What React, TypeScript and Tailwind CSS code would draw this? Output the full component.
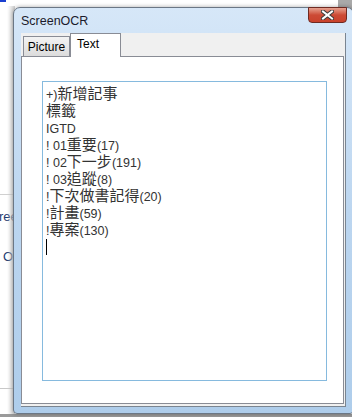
import React from 'react';

const lines = [
  '+)新增記事',
  '標籤',
  'IGTD',
  '! 01重要(17)',
  '! 02下一步(191)',
  '! 03追蹤(8)',
  '!下次做書記得(20)',
  '!計畫(59)',
  '!專案(130)',
];

// CJK glyphs render larger than the latin ones in the original font
const Line: React.FC<{ text: string }> = ({ text }) => {
  const parts = text.match(/[\u3400-\u9fff]+|[^\u3400-\u9fff]+/g) || [];
  return (
    <div className="h-[17px] leading-[17px] whitespace-nowrap">
      {parts.map((p, i) =>
        /[\u3400-\u9fff]/.test(p) ? (
          <span key={i} className="text-[15px]">{p}</span>
        ) : (
          <span key={i} className="text-[12.5px]">{p}</span>
        )
      )}
    </div>
  );
};

export default function App() {
  return (
    <div className="relative w-[352px] h-[417px] overflow-hidden bg-white font-['Liberation_Sans',sans-serif]">
      {/* desktop behind the window */}
      <div className="absolute left-0 top-0 w-[6px] h-[2px] bg-[#1a3fd0]" />
      <div className="absolute right-0 top-0 w-[14px] h-[10px] bg-[#a9a9a9]" />
      <div className="absolute left-0 top-[194px] w-[14px] h-px bg-[#d0d0d0]" />
      <div className="absolute left-0 top-[388px] w-[14px] h-px bg-[#c8c8c8]" />
      <div className="absolute left-[-1px] top-[210px] text-[13px] leading-none text-[#1b3a70]">ree</div>
      <div className="absolute left-[3px] top-[250px] text-[13px] leading-none text-[#1b3a70]">Oi</div>
      <div className="absolute left-[7px] top-[6px] w-[8px] h-[411px] bg-gradient-to-r from-transparent to-[#cfcfcf]" />
      <div className="absolute left-0 bottom-0 w-full h-[3px] bg-[#9a9a9a]" />

      {/* window */}
      <div className="absolute left-[13px] top-[7px] w-[341px] h-[407px] rounded-t-[7px] rounded-b-[4px] border border-[#6b7785] bg-gradient-to-b from-[#d6e7f8] via-[#bcd6f0] to-[#aecdeb] flex flex-col shadow-[0_0_4px_rgba(0,0,0,0.35)]">
        {/* title bar */}
        <div className="h-[25px] flex items-start justify-between pl-[7px] pr-[6px]">
          <span className="mt-[7px] text-[12.5px] leading-none text-[#1b1b2b]">ScreenOCR</span>
          <div className="w-[39px] h-[16px] -mt-px rounded-b-[4px] border border-[#6e2a22] bg-gradient-to-b from-[#e5a08f] via-[#cc4a35] to-[#c9422c] flex items-center justify-center">
            <svg width="13" height="10" viewBox="0 0 13 10">
              <path d="M2 1.5 L11 8.5 M11 1.5 L2 8.5" stroke="#3a3a3a" strokeWidth="4" strokeLinecap="square" />
              <path d="M2 1.5 L11 8.5 M11 1.5 L2 8.5" stroke="#ffffff" strokeWidth="2" strokeLinecap="square" />
            </svg>
          </div>
        </div>

        {/* client area */}
        <div className="ml-[7px] mr-[7px] mb-[6px] flex-1 bg-[#f0f0f0] border-r border-b border-[#7a8591] flex flex-col">
          {/* tab strip */}
          <div className="h-[23px] flex items-end pl-[2px]">
            <div className="h-[20px] w-[47px] border border-b-0 border-[#898c95] bg-gradient-to-b from-[#f3f3f3] to-[#dcdcdc] flex items-center justify-center text-[12px] text-black">
              Picture
            </div>
            <div className="relative h-[24px] w-[51px] -mb-px border border-b-0 border-[#898c95] bg-white pl-[6px] pt-[3px] text-[12px] leading-[14px] text-black z-10">
              Text
            </div>
          </div>
          {/* tab panel */}
          <div className="flex-1 mr-[1px] mb-[2px] border border-[#898c95] bg-white pt-[24px] pl-[20px] pr-[16px] pb-[22px] flex">
            <div className="flex-1 border border-[#86bade] bg-white pl-[3px] pt-[3px] text-[#333] font-['Liberation_Sans','Noto_Sans_CJK_TC',sans-serif]">
              {lines.map((l) => (
                <Line key={l} text={l} />
              ))}
              <div className="mt-[1px] w-px h-[16px] bg-black" />
            </div>
          </div>
        </div>
      </div>
    </div>
  );
}
